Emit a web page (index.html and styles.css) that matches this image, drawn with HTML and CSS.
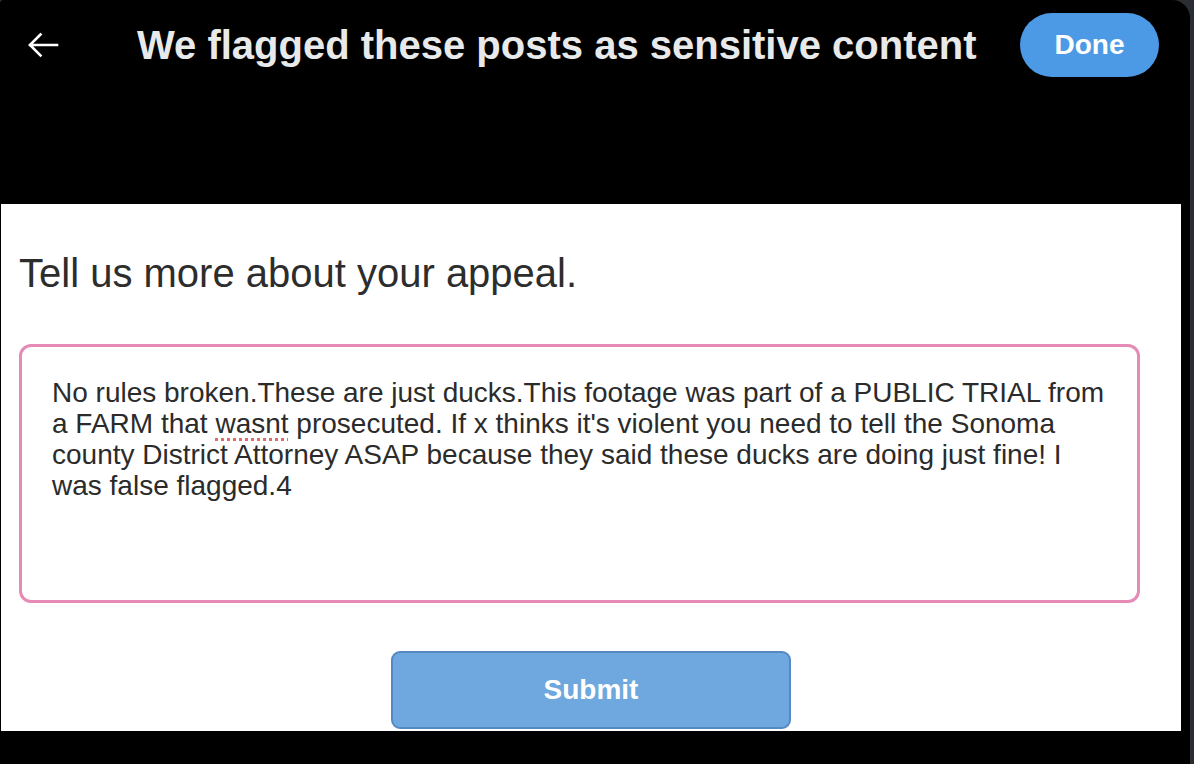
FILE: index.html
```html
<!DOCTYPE html>
<html lang="en">
<head>
<meta charset="utf-8">
<title>We flagged these posts as sensitive content</title>
<link rel="stylesheet" href="styles.css">
</head>
<body>
<div class="modal">
  <header class="modal-header">
    <button class="back" aria-label="Back">
      <svg viewBox="0 0 40 40" width="40" height="40"><path fill="none" stroke="#ffffff" stroke-width="2.6" stroke-linecap="square" d="M7 20H34M7 20L17.5 9.5M7 20L17.5 30.5"/></svg>
    </button>
    <h1 class="title">We flagged these posts as sensitive content</h1>
    <button class="done">Done</button>
  </header>
  <div class="spacer"></div>
  <section class="panel">
    <h2 class="prompt">Tell us more about your appeal.</h2>
    <div class="textbox">No rules broken.These are just ducks.This footage was part of a PUBLIC TRIAL from<br>a FARM that <span class="typo">wasnt</span> prosecuted. If x thinks it's violent you need to tell the Sonoma<br>county District Attorney ASAP because they said these ducks are doing just fine! I<br>was false flagged.4</div>
    <div class="actions">
      <button class="submit">Submit</button>
    </div>
  </section>
</div>
</body>
</html>
```
FILE: styles.css
```css
html, body {
  margin: 0;
  padding: 0;
}
body {
  width: 1194px;
  height: 764px;
  background: #2a2d31;
  overflow: hidden;
  font-family: "Liberation Sans", Arial, sans-serif;
}
.modal {
  width: 1190px;
  height: 764px;
  background: #000000;
  border-radius: 4px 18px 0 0;
  display: flex;
  flex-direction: column;
  overflow: hidden;
}
.modal-header {
  height: 90px;
  display: flex;
  align-items: center;
  padding: 0 31px 0 23px;
  flex: none;
}
.back {
  width: 40px;
  height: 40px;
  padding: 0;
  border: 0;
  background: transparent;
  display: flex;
}
.title {
  margin: 0 0 0 74px;
  font-size: 40px;
  line-height: 48px;
  font-weight: 700;
  color: #e7e9ea;
  white-space: nowrap;
}
.done {
  margin-left: auto;
  width: 139px;
  height: 64px;
  border: 0;
  border-radius: 32px;
  background: #4c9ae6;
  color: #ffffff;
  font-family: "Liberation Sans", Arial, sans-serif;
  font-size: 28px;
  font-weight: 700;
  padding: 0;
}
.spacer {
  height: 114px;
  flex: none;
}
.panel {
  margin-left: 1px;
  width: 1180px;
  height: 527px;
  background: #ffffff;
  flex: none;
  padding: 46px 0 0 18px;
  box-sizing: border-box;
  overflow: hidden;
}
.prompt {
  margin: 0;
  font-size: 40px;
  line-height: 46px;
  font-weight: 400;
  color: #2d2d2d;
}
.textbox {
  margin-top: 48px;
  width: 1121px;
  height: 259px;
  box-sizing: border-box;
  border: 3px solid #e68bb5;
  border-radius: 12px;
  padding: 30px 30px 0 30px;
  font-size: 28px;
  line-height: 31px;
  color: #2b2b2b;
  white-space: nowrap;
}
.typo {
  text-decoration: underline dotted #e46a6a;
  text-decoration-thickness: 3px;
  text-underline-offset: 5px;
}
.actions {
  margin-top: 48px;
  margin-left: -18px;
  width: 1180px;
  display: flex;
  justify-content: center;
}
.submit {
  width: 400px;
  height: 78px;
  box-sizing: border-box;
  background: #6ea8de;
  border: 2px solid #5589c2;
  border-radius: 9px;
  color: #ffffff;
  font-family: "Liberation Sans", Arial, sans-serif;
  font-size: 28px;
  font-weight: 700;
}
```
